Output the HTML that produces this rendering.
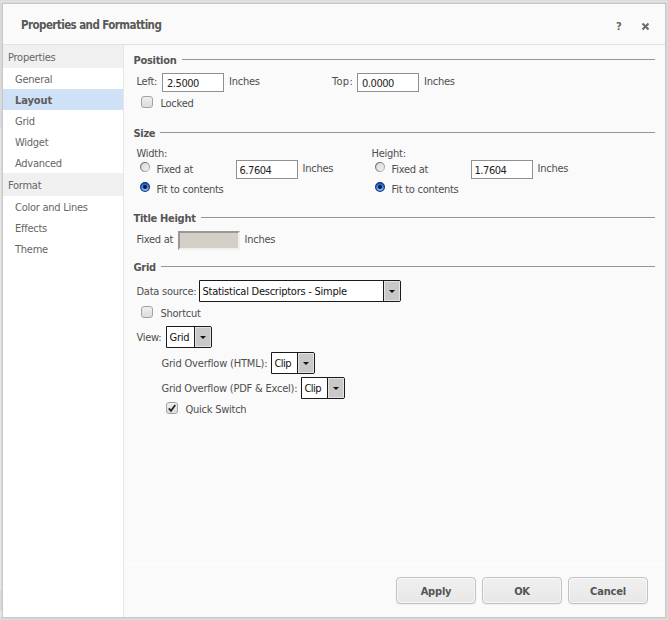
<!DOCTYPE html>
<html>
<head>
<meta charset="utf-8">
<title>Properties and Formatting</title>
<style>
html,body{margin:0;padding:0;}
body{width:668px;height:620px;overflow:hidden;background:#dcdcdc;font-family:"DejaVu Sans Condensed","Liberation Sans",sans-serif;font-size:11px;letter-spacing:-0.25px;color:#4e4e4e;position:relative;}
.abs{position:absolute;}
.t{position:absolute;white-space:nowrap;line-height:14px;height:14px;}
.b{font-weight:bold;letter-spacing:-0.3px;}
#dlg{position:absolute;left:3px;top:3px;width:662px;height:614px;}
#bg{position:absolute;left:0;top:1px;width:662px;height:613px;background:#fafafa;box-shadow:0 0 0 1px #c8c8c8,0 0 2px 1px rgba(0,0,0,.08);}
#hdr{position:absolute;left:0;top:1px;width:662px;height:40px;border-bottom:1px solid #e2e2e2;background:#fafafa;}
#side{position:absolute;left:0;top:42px;width:120px;height:572px;background:#fff;border-right:1px solid #e6e6e6;}
.sh{position:absolute;left:0;width:120px;background:#f0f0f0;}
.sel{position:absolute;left:0;width:120px;height:21px;background:#cfe1f7;}
.st{color:#666;}
.hl{position:absolute;height:1px;background:#959595;}
.inp{position:absolute;box-sizing:border-box;border:1px solid #909090;background:#fff;}
.cb{position:absolute;box-sizing:border-box;width:12px;height:12px;border:1px solid #a2a2a2;border-radius:3px;background:linear-gradient(#efefef,#dcdcdc);box-shadow:0 0 1px #fff;}
.rd{position:absolute;box-sizing:border-box;width:11px;height:11px;border:1px solid #9a9a9a;border-radius:50%;background:linear-gradient(#f6f6f6,#dcdcdc);}
.rd.on{border-color:#274a8a;background:radial-gradient(circle at 50% 50%,#0c2a6b 0,#1d4fa8 2.2px,#7fb0ee 3.6px,#dbe9fb 5px);}
.selbox{position:absolute;box-sizing:border-box;border:1px solid #1a1a1a;border-radius:0 2px 2px 0;background:#fff;}
.selbox i{position:absolute;right:0;top:0;bottom:0;width:16px;border-left:1px solid #1a1a1a;background:#c8c8c8;box-shadow:inset 0 0 0 1px #e4e4e4;border-radius:0 2px 2px 0;}
.selbox b{position:absolute;right:5px;top:9px;width:0;height:0;border-left:3px solid transparent;border-right:3px solid transparent;border-top:3px solid #111;}
.num{color:#222;letter-spacing:-0.45px;}
.sv{color:#111;margin-left:-0.5px;}
.hd{color:#555;}
.selbtn{position:absolute;box-sizing:border-box;border:1px solid #444;border-radius:2px;background:linear-gradient(#f2f2f2,#d4d4d4);}
.arr{position:absolute;width:0;height:0;border-left:3px solid transparent;border-right:3px solid transparent;border-top:3px solid #111;}
.btn{position:absolute;box-sizing:border-box;width:80px;height:27px;border:1px solid #c2c2c2;border-radius:4px;background:linear-gradient(#f0f0f0,#e7e7e7);box-shadow:inset 0 0 0 1px rgba(255,255,255,.55),0 1px 1px rgba(0,0,0,.05);}
.btn span{position:absolute;left:0;width:100%;top:6px;text-align:center;font-weight:bold;font-size:11px;letter-spacing:-0.2px;line-height:15px;color:#555;}
</style>
</head>
<body>
<svg width="0" height="0" style="position:absolute"><defs>
<linearGradient id="g0s" x1="0" y1="0" x2="1" y2="1"><stop offset="0" stop-color="#666"/><stop offset="1" stop-color="#c8c8c8"/></linearGradient>
<linearGradient id="g0f" x1="0" y1="0" x2="1" y2="1"><stop offset="0" stop-color="#d6d6d6"/><stop offset="1" stop-color="#f4f4f4"/></linearGradient>
<linearGradient id="g1f" x1="0" y1="0" x2="0" y2="1"><stop offset="0" stop-color="#1f55b8"/><stop offset="0.5" stop-color="#3f8ae0"/><stop offset="1" stop-color="#a8dcff"/></linearGradient>
<g id="r0"><circle cx="5" cy="5" r="4.5" fill="url(#g0f)" stroke="url(#g0s)" stroke-width="1.2"/></g>
<g id="r1"><circle cx="5" cy="5" r="4.4" fill="url(#g1f)" stroke="#15348a" stroke-width="1.2"/><circle cx="5" cy="4.9" r="2" fill="#0b1930"/></g>
</defs></svg>
<div class="abs" style="left:0;top:128px;width:2px;height:462px;background:#e7e7e7;"></div>
<div class="abs" style="left:1px;top:128px;width:1px;height:462px;background:repeating-linear-gradient(to bottom,#d6d6d6 0,#d6d6d6 1px,#e9e9e9 1px,#e9e9e9 2px);"></div>
<div class="abs" style="left:0;top:611px;width:2px;height:6px;background:#e9e9e9;"></div>
<div class="abs" style="left:0;top:1px;width:668px;height:1px;background:#e6e6e6;"></div>
<div id="dlg">
  <div id="bg"></div>
  <div id="hdr"></div>
  <div class="t b" style="left:18px;top:14.5px;font-size:11.5px;letter-spacing:-0.58px;color:#585858;">Properties and Formatting</div>
  <div class="t b" style="left:613px;top:17px;font-size:11px;color:#666;">?</div>
  <svg class="abs" style="left:638px;top:19px;" width="10" height="10" viewBox="0 0 10 10"><path d="M1.5 1.5 L7.5 7.5 M7.5 1.5 L1.5 7.5" stroke="#6a6a6a" stroke-width="2" fill="none"/></svg>

  <div id="side">
    <div class="sh" style="top:0;height:23px;"></div>
    <div class="sel" style="top:44px;"></div>
    <div class="sh" style="top:128px;height:23px;"></div>
    <div class="t st" style="left:5px;top:6px;">Properties</div>
    <div class="t st" style="left:12px;top:28px;">General</div>
    <div class="t st b" style="left:12px;top:49px;color:#5c5c5c;letter-spacing:-0.1px;">Layout</div>
    <div class="t st" style="left:12px;top:70px;">Grid</div>
    <div class="t st" style="left:12px;top:91px;">Widget</div>
    <div class="t st" style="left:12px;top:112px;">Advanced</div>
    <div class="t st" style="left:5px;top:134px;">Format</div>
    <div class="t st" style="left:12px;top:156px;">Color and Lines</div>
    <div class="t st" style="left:12px;top:177px;">Effects</div>
    <div class="t st" style="left:12px;top:198px;">Theme</div>
  </div>

  <!-- Position -->
  <div class="t b hd" style="left:130.5px;top:51px;">Position</div>
  <div class="hl" style="left:179px;top:56px;width:473px;"></div>
  <div class="t" style="left:133.5px;top:72px;">Left:</div>
  <div class="inp" style="left:159px;top:70px;width:62px;height:19px;"></div>
  <div class="t num" style="left:164px;top:74px;">2.5000</div>
  <div class="t" style="left:226px;top:72px;">Inches</div>
  <div class="t" style="left:329px;top:72px;letter-spacing:0.3px;">Top:</div>
  <div class="inp" style="left:354px;top:70px;width:62px;height:19px;"></div>
  <div class="t num" style="left:359px;top:74px;">0.0000</div>
  <div class="t" style="left:421px;top:72px;">Inches</div>
  <div class="cb" style="left:138px;top:93px;"></div>
  <div class="t" style="left:157.5px;top:94px;">Locked</div>

  <!-- Size -->
  <div class="t b hd" style="left:130.5px;top:124px;">Size</div>
  <div class="hl" style="left:157px;top:129px;width:495px;"></div>
  <div class="t" style="left:133.5px;top:144px;">Width:</div>
  <svg class="abs" style="left:137px;top:159px;" width="10" height="10" viewBox="0 0 10 10"><use href="#r0"/></svg>
  <div class="t" style="left:153.5px;top:160px;">Fixed at</div>
  <div class="inp" style="left:233px;top:157px;width:62px;height:19px;"></div>
  <div class="t num" style="left:236.5px;top:161px;">6.7604</div>
  <div class="t" style="left:299.5px;top:159px;">Inches</div>
  <svg class="abs" style="left:137px;top:179px;" width="10" height="10" viewBox="0 0 10 10"><use href="#r1"/></svg>
  <div class="t" style="left:153.5px;top:180px;">Fit to contents</div>

  <div class="t" style="left:368.5px;top:144px;">Height:</div>
  <svg class="abs" style="left:372px;top:159px;" width="10" height="10" viewBox="0 0 10 10"><use href="#r0"/></svg>
  <div class="t" style="left:388.5px;top:160px;">Fixed at</div>
  <div class="inp" style="left:468px;top:157px;width:62px;height:19px;"></div>
  <div class="t num" style="left:471.5px;top:161px;">1.7604</div>
  <div class="t" style="left:534.5px;top:159px;">Inches</div>
  <svg class="abs" style="left:372px;top:179px;" width="10" height="10" viewBox="0 0 10 10"><use href="#r1"/></svg>
  <div class="t" style="left:388.5px;top:180px;">Fit to contents</div>

  <!-- Title Height -->
  <div class="t b hd" style="left:130.5px;top:209px;">Title Height</div>
  <div class="hl" style="left:198px;top:214px;width:454px;"></div>
  <div class="t" style="left:133.5px;top:230px;">Fixed at</div>
  <div class="inp" style="left:175px;top:228px;width:62px;height:19px;background:#d4d0c8;border-color:#989898 #f0f0f0 #f0f0f0 #989898;border-width:2px;"></div>
  <div class="t" style="left:241.5px;top:230px;">Inches</div>

  <!-- Grid -->
  <div class="t b hd" style="left:130.5px;top:258px;">Grid</div>
  <div class="hl" style="left:158px;top:263px;width:494px;"></div>
  <div class="t" style="left:133.5px;top:282px;">Data source:</div>
  <div class="selbox" style="left:196px;top:277px;width:202px;height:22px;"><i></i><b></b></div>
  <div class="t sv" style="left:200px;top:282px;">Statistical Descriptors - Simple</div>
  <div class="cb" style="left:138px;top:303px;"></div>
  <div class="t" style="left:157.5px;top:304px;">Shortcut</div>

  <div class="t" style="left:133.5px;top:328px;">View:</div>
  <div class="selbox" style="left:163px;top:323px;width:46px;height:22px;"><i></i><b></b></div>
  <div class="t sv" style="left:167px;top:328px;">Grid</div>

  <div class="t" style="left:158.5px;top:354px;letter-spacing:-0.19px;">Grid Overflow (HTML):</div>
  <div class="selbox" style="left:268px;top:349px;width:44px;height:22px;"><i></i><b></b></div>
  <div class="t sv" style="left:272px;top:354px;letter-spacing:-0.55px;">Clip</div>

  <div class="t" style="left:158.5px;top:379px;letter-spacing:-0.21px;">Grid Overflow (PDF &amp; Excel):</div>
  <div class="selbox" style="left:298px;top:374px;width:44px;height:22px;"><i></i><b></b></div>
  <div class="t sv" style="left:302px;top:379px;letter-spacing:-0.55px;">Clip</div>

  <div class="cb" style="left:163px;top:399px;"></div>
  <svg class="abs" style="left:163px;top:399px;" width="12" height="12" viewBox="0 0 12 12"><path d="M2.8 6.4 L5 8.8 L9.3 3.1" fill="none" stroke="#222" stroke-width="1.7"/></svg>
  <div class="t" style="left:182.5px;top:400px;">Quick Switch</div>

  <!-- footer -->
  <div class="abs" style="left:121px;top:561px;width:541px;height:1px;background:#fff;"></div>
  <div class="btn" style="left:393px;top:574px;"><span>Apply</span></div>
  <div class="btn" style="left:479px;top:574px;"><span>OK</span></div>
  <div class="btn" style="left:565px;top:574px;"><span>Cancel</span></div>
</div>
</body>
</html>
